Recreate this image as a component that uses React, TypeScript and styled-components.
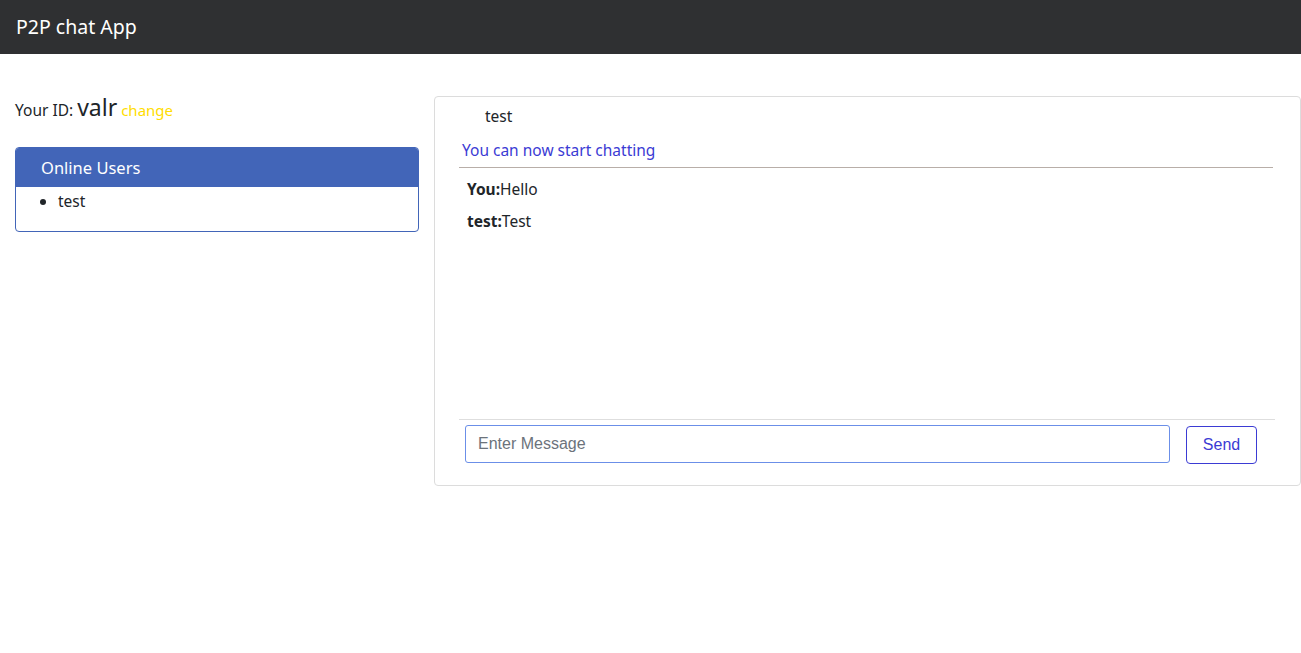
import React from "react";
import styled, { createGlobalStyle } from "styled-components";

const GlobalStyle = createGlobalStyle`
	html, body {
		margin: 0;
		padding: 0;
		background: #fff;
	}
	body {
		font-family: "Noto Sans", "Open Sans", sans-serif;
		font-size: 16px;
		color: #212529;
	}
	* { box-sizing: border-box; }
`;

const NavBar = styled.nav`
	height: 54px;
	background: #2f3032;
	display: flex;
	align-items: center;
	padding: 0 16px;
`;

const Brand = styled.div`
	color: #fff;
	font-size: 19.5px;
	padding-bottom: 1px;
`;

const Layout = styled.main`
	display: grid;
	grid-template-columns: 434px 1fr;
	padding-top: 42px;
`;

const Sidebar = styled.section`
	padding: 0 15px;
`;

const IdLine = styled.div`
	display: flex;
	align-items: baseline;
	gap: 4px;
	margin-top: -5px;
	font-size: 15.5px;
`;

const IdValue = styled.span`
	font-size: 23px;
	color: #212529;
`;

const ChangeLink = styled.a`
	color: #ffdd00;
	font-size: 15px;
	cursor: pointer;
`;

const UsersCard = styled.div`
	margin-top: 24px;
	border: 1px solid #4265b8;
	border-radius: 4px;
	overflow: hidden;
`;

const UsersHeader = styled.div`
	background: #4265b8;
	color: #fff;
	height: 39px;
	display: flex;
	align-items: center;
	padding-left: 25px;
	font-size: 16.5px;
`;

const UsersList = styled.ul`
	margin: 0;
	padding: 3px 0 19px 42px;
	font-size: 15.5px;
	line-height: 22px;
`;

const ChatCard = styled.section`
	border: 1px solid #dcdcdc;
	border-radius: 4px;
	height: 390px;
	display: flex;
	flex-direction: column;
	padding: 0 27px 0 24px;
`;

const PeerName = styled.div`
	font-size: 15.5px;
	padding: 8px 0 0 26px;
	line-height: 22px;
`;

const Status = styled.div`
	color: #3b3bd4;
	font-size: 15.5px;
	padding: 12px 0 6px 3px;
	line-height: 22px;
	border-bottom: 1px solid #b8aea8;
`;

const Messages = styled.div`
	flex: 1;
	padding: 10px 0 0 8px;
	display: flex;
	flex-direction: column;
	gap: 10px;
	font-size: 15.5px;
	line-height: 22px;
`;

const Author = styled.b`
	font-weight: 700;
`;

const Composer = styled.div`
	border-top: 1px solid #dedede;
	display: flex;
	align-items: flex-start;
	gap: 16px;
	padding: 5px 16px 21px 6px;
	margin-right: -2px;
`;

const MessageInput = styled.input`
	flex: 1;
	height: 38px;
	border: 1px solid #6b8fe8;
	border-radius: 3px;
	padding: 0 12px;
	font-family: "Liberation Sans", Arial, sans-serif;
	font-size: 16px;
	color: #495057;
	outline: none;
	&::placeholder { color: #6c737b; }
`;

const SendButton = styled.button`
	width: 71px;
	height: 38px;
	margin: 1px 2px 0 0;
	background: #fff;
	border: 1px solid #3b3bd4;
	border-radius: 4px;
	color: #3b3bd4;
	font-family: "Liberation Sans", Arial, sans-serif;
	font-size: 16px;
	cursor: pointer;
`;

const messages = [
	{ from: "You", text: "Hello" },
	{ from: "test", text: "Test" },
];

export default function App() {
	return (
		<>
			<GlobalStyle />
			<NavBar>
				<Brand>P2P chat App</Brand>
			</NavBar>
			<Layout>
				<Sidebar>
					<IdLine>
						Your ID: <IdValue>valr</IdValue>
						<ChangeLink>change</ChangeLink>
					</IdLine>
					<UsersCard>
						<UsersHeader>Online Users</UsersHeader>
						<UsersList>
							<li>test</li>
						</UsersList>
					</UsersCard>
				</Sidebar>
				<ChatCard>
					<PeerName>test</PeerName>
					<Status>You can now start chatting</Status>
					<Messages>
						{messages.map((m, i) => (
							<div key={i}>
								<Author>{m.from}:</Author>
								{m.text}
							</div>
						))}
					</Messages>
					<Composer>
						<MessageInput placeholder="Enter Message" />
						<SendButton>Send</SendButton>
					</Composer>
				</ChatCard>
			</Layout>
		</>
	);
}
